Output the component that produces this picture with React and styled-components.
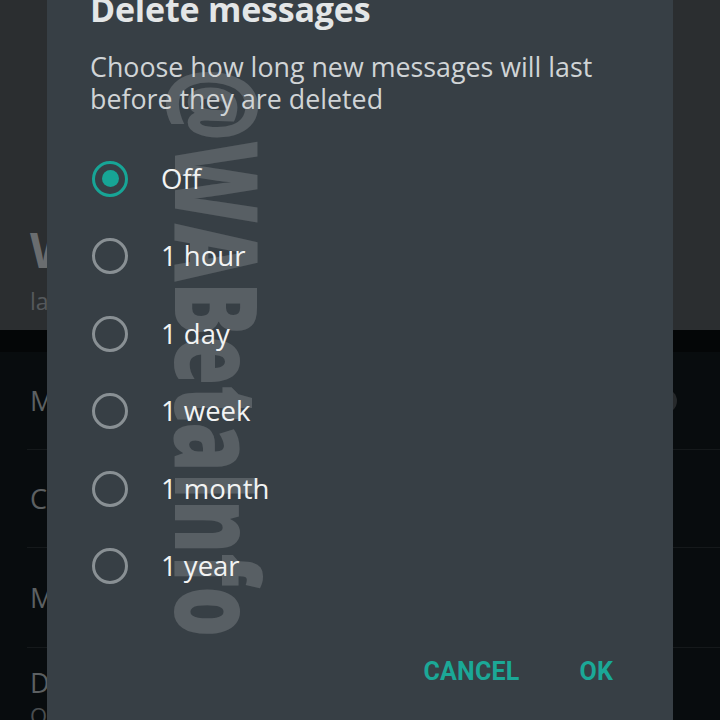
import styled, { createGlobalStyle } from "styled-components";

const GlobalStyle = createGlobalStyle`
  html, body {
    margin: 0;
    padding: 0;
    background: #080c0e;
  }
  body {
    font-family: "Open Sans", "Noto Sans", sans-serif;
  }
`;

const Screen = styled.div`
  position: relative;
  width: 720px;
  height: 720px;
  overflow: hidden;
  background: #080c0e;
`;

const Header = styled.div`
  height: 330px;
  background: #2b2e30;
  padding: 0 30px;
  box-sizing: border-box;
  display: flex;
  flex-direction: column;
  justify-content: flex-end;
  padding-bottom: 14px;
`;

const HeaderTitle = styled.div`
  font-size: 48px;
  font-weight: 700;
  color: #6a6d6f;
  line-height: 52px;
`;

const HeaderSub = styled.div`
  font-size: 23px;
  color: #55595c;
  line-height: 30px;
  margin-top: 10px;
`;

const Band = styled.div`
  height: 22px;
  background: #040607;
`;

const Row = styled.div`
  height: ${(p) => p.$h || 98}px;
  margin-left: 27px;
  padding-right: 27px;
  border-bottom: 1px solid #15191b;
  display: flex;
  align-items: center;
  justify-content: space-between;
  box-sizing: border-box;
`;

const RowText = styled.div`
  display: flex;
  flex-direction: column;
  padding-left: 3px;
  padding-top: ${(p) => p.$top || 0}px;
  align-self: ${(p) => (p.$top ? "flex-start" : "center")};
`;

const RowLabel = styled.div`
  font-size: 27px;
  line-height: 34px;
  color: #5c6062;
`;

const RowSub = styled.div`
  font-size: 22px;
  line-height: 30px;
  color: #4a4e50;
`;

const Thumb = styled.div`
  width: 24px;
  height: 24px;
  border-radius: 50%;
  background: #26292b;
  margin-right: 16px;
`;

const Dialog = styled.div`
  position: absolute;
  left: 47px;
  top: -30px;
  width: 626px;
  height: 790px;
  background: #373f45;
  box-sizing: border-box;
  padding: 19px 60px 0 43px;
  display: flex;
  flex-direction: column;
`;

const Title = styled.h2`
  margin: 0;
  font-size: 34px;
  font-weight: 700;
  line-height: 40px;
  color: #e3e6e7;
  letter-spacing: -0.2px;
  position: relative;
  z-index: 2;
`;

const Message = styled.p`
  margin: 22px 0 0;
  font-size: 26.8px;
  line-height: 32px;
  color: #d0d4d6;
  position: relative;
  z-index: 2;
`;

const Options = styled.div`
  margin-top: 25px;
  display: flex;
  flex-direction: column;
  position: relative;
  z-index: 2;
`;

const Option = styled.div`
  height: 77.5px;
  display: flex;
  align-items: center;
  gap: 33px;
  margin-left: 2px;
`;

const Radio = styled.div`
  width: 36px;
  height: 36px;
  border-radius: 50%;
  box-sizing: border-box;
  border: 3px solid ${(p) => (p.$checked ? "#17a596" : "#899094")};
  display: flex;
  align-items: center;
  justify-content: center;
  flex: none;
  &::after {
    content: "";
    width: 17px;
    height: 17px;
    border-radius: 50%;
    background: #17a596;
    display: ${(p) => (p.$checked ? "block" : "none")};
  }
`;

const OptionLabel = styled.span`
  font-size: 27.5px;
  color: #f2f3f3;
  line-height: 32px;
`;

const Actions = styled.div`
  margin-top: 51px;
  display: flex;
  justify-content: flex-end;
  gap: 60px;
  position: relative;
  z-index: 2;
`;

const ActionButton = styled.button`
  background: none;
  border: none;
  padding: 0;
  font-family: "Roboto", "Open Sans", sans-serif;
  font-weight: 700;
  font-size: 25px;
  line-height: 32px;
  color: #1ba897;
  letter-spacing: 0.2px;
`;

const Watermark = styled.div`
  position: absolute;
  left: 220px;
  top: 353px;
  width: 0;
  height: 0;
  z-index: 1;
  pointer-events: none;
`;

const WatermarkText = styled.span`
  position: absolute;
  left: 0;
  top: 0;
  white-space: nowrap;
  font-family: "Open Sans", sans-serif;
  font-weight: 800;
  font-size: 116px;
  line-height: 1;
  color: rgba(255, 255, 255, 0.17);
  transform: translate(-50%, -50%) rotate(90deg) scaleX(0.69);
`;

const options = ["Off", "1 hour", "1 day", "1 week", "1 month", "1 year"];

export default function App() {
  return (
    <Screen>
      <GlobalStyle />
      <Header>
        <HeaderTitle>W</HeaderTitle>
        <HeaderSub>la</HeaderSub>
      </Header>
      <Band />
      <Row>
        <RowText>
          <RowLabel>M</RowLabel>
        </RowText>
        <Thumb />
      </Row>
      <Row>
        <RowText>
          <RowLabel>C</RowLabel>
        </RowText>
      </Row>
      <Row $h={100}>
        <RowText>
          <RowLabel>M</RowLabel>
        </RowText>
      </Row>
      <Row $h={100}>
        <RowText $top={18}>
          <RowLabel>D</RowLabel>
          <RowSub>O</RowSub>
        </RowText>
      </Row>

      <Dialog>
        <Title>Delete messages</Title>
        <Message>
          Choose how long new messages will last
          <br />
          before they are deleted
        </Message>
        <Options>
          {options.map((o, i) => (
            <Option key={o}>
              <Radio $checked={i === 0} />
              <OptionLabel>{o}</OptionLabel>
            </Option>
          ))}
        </Options>
        <Actions>
          <ActionButton>CANCEL</ActionButton>
          <ActionButton>OK</ActionButton>
        </Actions>
      </Dialog>

      <Watermark>
        <WatermarkText>@WABetaInfo</WatermarkText>
      </Watermark>
    </Screen>
  );
}
